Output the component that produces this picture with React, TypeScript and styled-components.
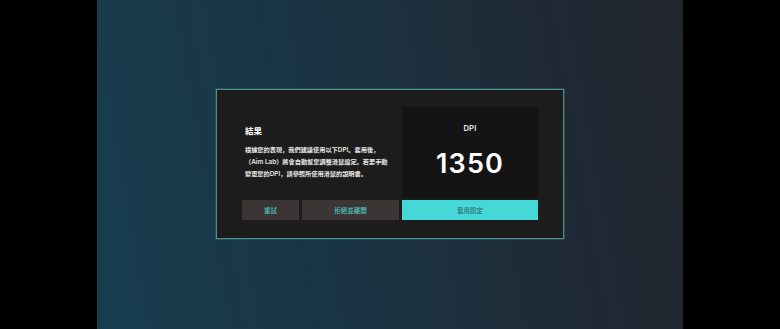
import React from "react";
import styled, { createGlobalStyle } from "styled-components";

const Global = createGlobalStyle`
  html, body { margin: 0; padding: 0; background: #000; }
  body { width: 780px; height: 329px; overflow: hidden; }
  #root { width: 780px; height: 329px; }
`;

const Screen = styled.div`
  width: 780px;
  height: 329px;
  display: flex;
  justify-content: center;
  background: #000;
`;

const Stage = styled.div`
  width: 586px;
  height: 329px;
  background: linear-gradient(80deg, #163d4f 0%, #1a3443 40%, #1f2a36 75%, #22252d 100%);
  display: flex;
  align-items: flex-start;
  justify-content: flex-start;
  padding: 89px 0 0 119px;
  box-sizing: border-box;
`;

const Dialog = styled.div`
  width: 348px;
  height: 150px;
  box-sizing: border-box;
  background: #1d1c1c;
  border: 1px solid #4a9393;
  box-shadow: 0 0 0 1px rgba(60, 130, 130, 0.35);
  padding: 17px 25px 18px 25px;
  display: grid;
  grid-template-columns: 57px 97px 136px;
  grid-template-rows: 91px 20px;
  column-gap: 3px;
  row-gap: 2px;
  font-family: "Noto Sans CJK JP", "Noto Sans", sans-serif;
`;

const TextBlock = styled.div`
  grid-column: 1 / 3;
  padding: 18px 0 0 3px;
  display: flex;
  flex-direction: column;
`;

const Title = styled.div`
  color: #ffffff;
  font-size: 8.5px;
  font-weight: 700;
  line-height: 10px;
  margin-bottom: 9px;
`;

const Para = styled.p`
  margin: 0;
  color: #e8e8e8;
  font-size: 6.2px;
  line-height: 11px;
  font-weight: 700;
  white-space: nowrap;
`;

const Latin = styled.span`
  font-family: "Inter", "Noto Sans", sans-serif;
  font-weight: 600;
  font-size: 6.4px;
`;

const Panel = styled.div`
  background: #141414;
  display: flex;
  flex-direction: column;
  align-items: center;
`;

const PanelLabel = styled.div`
  font-family: "Inter", sans-serif;
  font-weight: 600;
  font-size: 7.5px;
  color: #f2f2f2;
  margin-top: 17px;
  letter-spacing: 0.3px;
`;

const Value = styled.div`
  font-family: "Inter", sans-serif;
  font-weight: 600;
  font-size: 27px;
  line-height: 27px;
  color: #ffffff;
  margin-top: 17px;
  letter-spacing: 1.2px;
`;

const Button = styled.button<{ $primary?: boolean }>`
  border: none;
  margin: 0;
  padding: 0;
  height: 20px;
  background: ${(p) => (p.$primary ? "#46d7d7" : "#3b3535")};
  color: ${(p) => (p.$primary ? "#2f6c70" : "#4ec3c0")};
  font-family: "Noto Sans CJK JP", "Noto Sans", sans-serif;
  font-size: 6.5px;
  font-weight: 500;
  cursor: pointer;
`;

export default function App() {
  return (
    <>
      <Global />
      <Screen>
        <Stage>
          <Dialog>
            <TextBlock>
              <Title>結果</Title>
              <Para>
                根據您的表現，我們建議使用以下<Latin>DPI</Latin>。套用後，
                <br />
                （<Latin>Aim Lab</Latin>）將會自動幫您調整滑鼠設定。若要手動
                <br />
                變更您的<Latin>DPI</Latin>，請參照所使用滑鼠的說明書。
              </Para>
            </TextBlock>
            <Panel>
              <PanelLabel>DPI</PanelLabel>
              <Value>1350</Value>
            </Panel>
            <Button>重試</Button>
            <Button>拒絕並離開</Button>
            <Button $primary>套用設定</Button>
          </Dialog>
        </Stage>
      </Screen>
    </>
  );
}
